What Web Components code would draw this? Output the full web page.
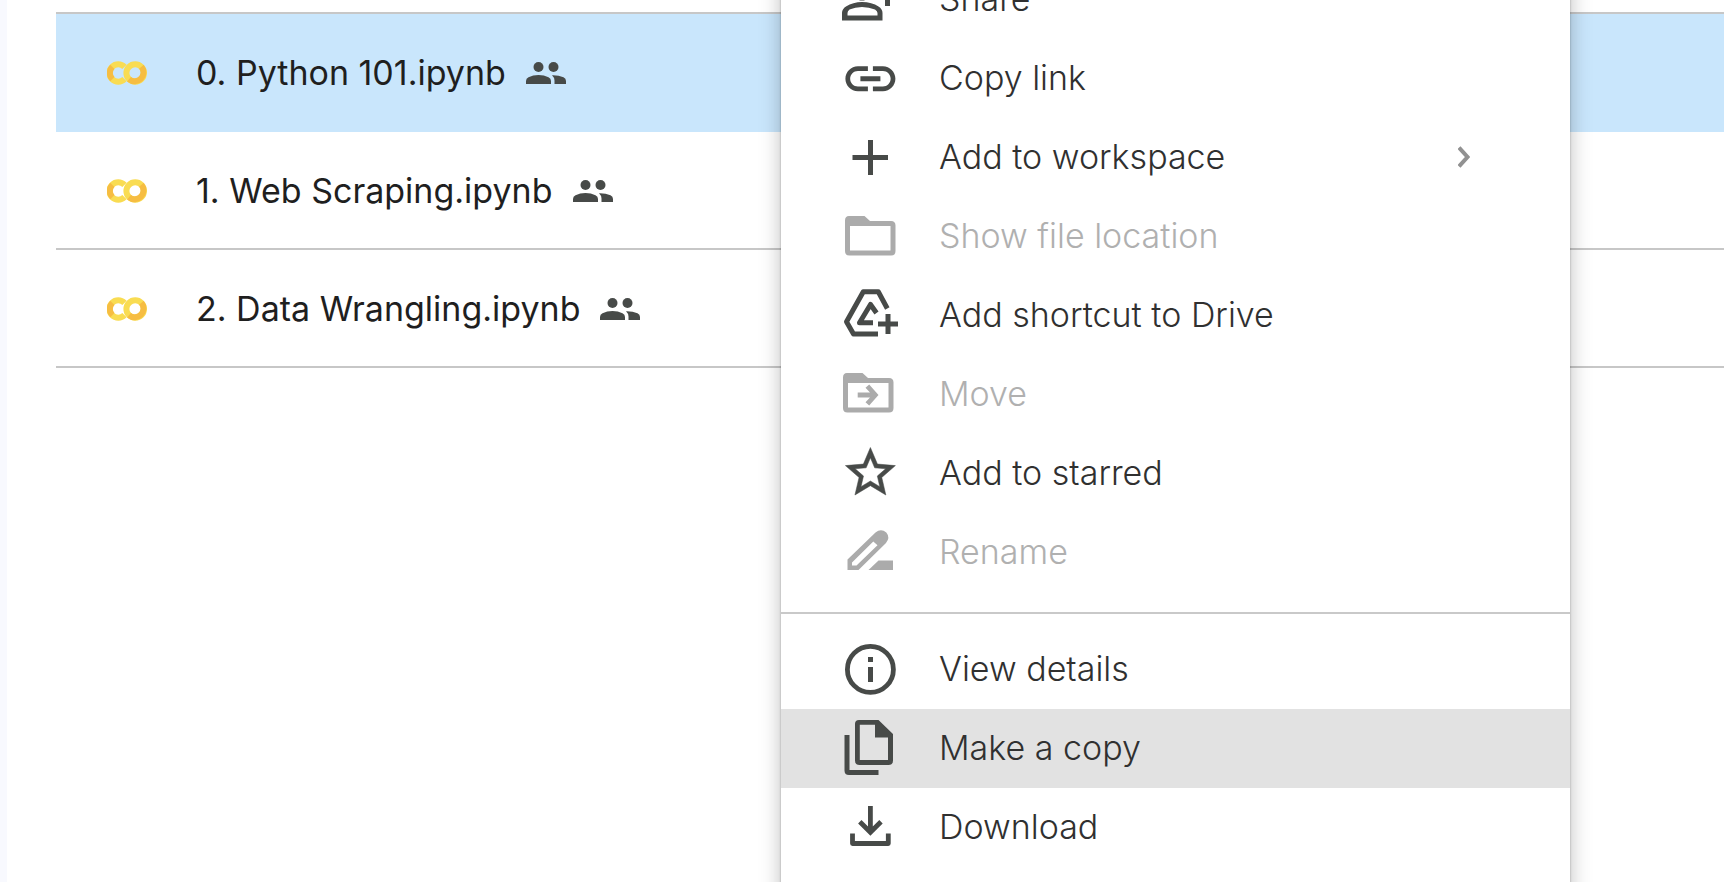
<!DOCTYPE html>
<html lang="en">
<head>
<meta charset="utf-8">
<meta name="viewport" content="width=device-width, initial-scale=1">
<title>Shared notebooks</title>
<style>
  body { margin: 0; font-family: Inter, "Liberation Sans", sans-serif; color: #1f1f1f; background: #fff; }
</style>
</head>
<body>
<drive-page>
  <file-list>
    <file-row selected>0. Python 101.ipynb</file-row>
    <file-row>1. Web Scraping.ipynb</file-row>
    <file-row>2. Data Wrangling.ipynb</file-row>
  </file-list>
  <context-menu slot="menu">
    <menu-entry icon="share">Share</menu-entry>
    <menu-entry icon="link">Copy link</menu-entry>
    <menu-entry icon="plus" submenu>Add to workspace</menu-entry>
    <menu-entry icon="folder" disabled>Show file location</menu-entry>
    <menu-entry icon="shortcut">Add shortcut to Drive</menu-entry>
    <menu-entry icon="move" disabled>Move</menu-entry>
    <menu-entry icon="star">Add to starred</menu-entry>
    <menu-entry icon="rename" disabled>Rename</menu-entry>
    <menu-divider></menu-divider>
    <menu-entry icon="info">View details</menu-entry>
    <menu-entry icon="copy" active>Make a copy</menu-entry>
    <menu-entry icon="download">Download</menu-entry>
  </context-menu>
</drive-page>

<script>
const FOLDER = '<path fill-rule="evenodd" d="M9 10H24.500L30 15H51Q55.500 15 55.500 19.500V45Q55.500 49.500 51 49.500H9.500Q5 49.500 5 45V14.500Q5 10 9 10ZM10 20V44.500H50.500V20Z"/>';

// Glyphs are drawn on a 60-unit canvas; Material shapes on 24 units are scaled up.
const ICONS = {
  share: '<circle cx="22" cy="21" r="8" fill="none" stroke="currentColor" stroke-width="5"/><path fill-rule="evenodd" d="M2 51.500V44Q2 40 6 37.500Q13 33 22 33Q32 33 38.500 37.500Q42.500 40 42.500 44V51.500ZM7.500 46.500H37.500V44Q37.500 42 35 40.500Q29 38 22 38Q15 38 9.500 40.500Q7.500 42 7.500 44Z"/><path d="M45 16H50V23.500H57.500V28.500H50V37H45V28.500H37.500V23.500H45Z"/>',
  link: '<g transform="translate(.4 .7) scale(2.5)"><path d="M3.900 12c0-1.710 1.390-3.100 3.100-3.100h4V7H7c-2.760 0-5 2.240-5 5s2.240 5 5 5h4v-1.900H7c-1.710 0-3.100-1.390-3.100-3.100zM8 13h8v-2H8v2zm9-6h-4v1.900h4c1.710 0 3.100 1.390 3.100 3.100s-1.390 3.100-3.100 3.100h-4V17h4c2.760 0 5-2.240 5-5s-2.240-5-5-5z"/></g>',
  plus: '<path d="M28 13H33V28H48V33H33V48H28V33H12.500V28H28Z"/>',
  folder: FOLDER,
  shortcut: '<g fill="none" stroke="currentColor" stroke-width="5"><path stroke-linejoin="round" d="M47.300 23.500L38.300 6.700H23.300L6.500 36.700L13.500 49H38"/><path stroke-linejoin="round" d="M33 37.800H19.500L30.500 19.500L36.500 28"/><path d="M48 29V49M38 39H58"/></g>',
  move: `<g transform="translate(-2 -1)">${FOLDER}</g><path d="M17.700 28.500H30L25.500 23.800L29.200 20.500L38.500 31L29.200 41.500L25.500 38.200L30 33.500H17.700Z"/>`,
  star: '<g transform="translate(.4 -.5) scale(2.5)"><path stroke="currentColor" stroke-width=".2" d="M22 9.240l-7.190-.62L12 2 9.190 8.630 2 9.240l5.460 4.730L5.820 21 12 17.270 18.180 21l-1.630-7.030L22 9.240zM12 15.400l-3.760 2.270 1-4.280-3.320-2.880 4.380-.38L12 6.100l1.710 4.040 4.380.38-3.320 2.880 1 4.280L12 15.400z"/></g>',
  rename: '<path fill-rule="evenodd" d="M7.500 48V37.500L35.500 10.500Q41 6 46.300 10.500Q50.500 15.500 46 21L18.500 48ZM12 43.500H16.500L37.500 23.300L33.300 19.500L12 40.500Z"/><path d="M28.500 48L38.500 38.500H53V48Z"/>',
  info: '<circle cx="30.400" cy="30.400" r="23" fill="none" stroke="currentColor" stroke-width="4.800"/><path d="M28 18H33V23H28ZM28 28H33V43H28Z"/>',
  copy: '<path fill-rule="evenodd" d="M19 2H38.500L53 16V42.500Q53 47 48.500 47H19.500Q15 47 15 42.500V6Q15 2 19 2ZM19.800 6.800V42H48V19.500H35V6.800Z"/><path d="M4.500 17H9.500V52H38.500V57H9Q4.500 57 4.500 52.500Z"/>',
  download: '<g fill="none" stroke="currentColor" stroke-width="4.800"><path d="M30.400 9V35M19.800 24.800L30.400 35.300L41 24.800"/><path stroke-linejoin="round" d="M12.500 36.500V46.500H48.300V36.500"/></g>'
};

function define(name, markup, setup) {
  const template = document.createElement('template');
  template.innerHTML = markup;
  customElements.define(name, class extends HTMLElement {
    constructor() {
      super();
      this.attachShadow({ mode: 'open' }).append(template.content.cloneNode(true));
    }
    connectedCallback() { if (setup) setup(this, this.shadowRoot); }
  });
}

define('drive-page', `
  <style>
    :host { display: grid; grid-template-columns: 7px 1fr; position: relative; height: 100vh; overflow: hidden; }
    .gutter { background: #f8f9fe; }
    main { padding: 12px 0 0 49px; }
    ::slotted([slot="menu"]) { position: absolute; left: 781px; top: -40px; width: 789px; }
  </style>
  <div class="gutter"></div>
  <main><slot></slot></main>
  <slot name="menu"></slot>`);

define('file-list', `
  <style>:host { display: block; border-top: 2px solid #c7c7c7; }</style>
  <slot></slot>`, el => el.setAttribute('role', 'list'));

define('file-row', `
  <style>
    :host { display: block; border-bottom: 2px solid #c7c7c7; }
    :host([selected]) { background: #c9e6fc; border-bottom-color: #c9e6fc; }
    a { display: flex; align-items: center; box-sizing: border-box; height: 116px; padding: 2px 0 0 51px; color: inherit; text-decoration: none; font-size: 34px; line-height: 44px; white-space: nowrap; }
    .logo { width: 40px; height: 24px; margin-right: 49px; flex: none; }
    .people { width: 40px; height: 24px; margin-left: 20px; flex: none; }
  </style>
  <a href="#">
    <svg class="logo" viewBox="0 0 40 24" fill="none" stroke-width="6" aria-hidden="true">
      <path stroke="#f9dc52" d="M17.500 5.800A8.800 8.800 0 1 0 17.500 18.200"/>
      <path stroke="#f6bd42" d="M5.400 5.800A8.800 8.800 0 0 0 5.400 18.200"/>
      <circle stroke="#f9dc52" cx="28.200" cy="12" r="8.800"/>
      <path stroke="#f6bd42" d="M34.400 5.800A8.800 8.800 0 0 1 22 18.200"/>
    </svg>
    <slot></slot>
    <svg class="people" viewBox="0 0 40 24" fill="#474a48" role="img" aria-label="Shared">
      <circle cx="12.500" cy="6" r="5"/><circle cx="27.500" cy="6" r="5"/>
      <path d="M0 23V20Q0 17.500 2.500 16.300Q7 14 12.500 14Q18 14 22.500 16.300Q25 17.500 25 20V23Z"/>
      <path d="M26 14.200Q32.500 14 37.500 16.300Q40 17.500 40 20V23H28.500V19.500Q28.500 16.500 26 14.200Z"/>
    </svg>
  </a>`, el => el.setAttribute('role', 'listitem'));

define('context-menu', `
  <style>
    :host { display: block; box-sizing: border-box; background: #fff; padding-bottom: 48px; box-shadow: 0 0 2px rgba(0,0,0,.3), 0 4px 20px rgba(0,0,0,.26); }
  </style>
  <slot></slot>`, el => el.setAttribute('role', 'menu'));

define('menu-divider', `
  <style>
    :host { display: block; padding: 20px 0 16px; }
    hr { margin: 0; border: 0; border-top: 2px solid #c9c9c9; }
  </style>
  <hr>`);

define('menu-entry', `
  <style>
    :host { display: block; color: #303030; --glyph: #474a48; }
    :host([disabled]) { color: #b0b0b0; --glyph: #ababab; }
    :host([active]) { background: #e2e2e2; }
    button { display: flex; align-items: center; box-sizing: border-box; width: 100%; height: 79px; padding: 0 100px 2px 59px; border: 0; background: none; color: inherit; font: 300 34px/44px Inter, "Liberation Sans", sans-serif; text-align: left; white-space: nowrap; }
    .icon { width: 60px; height: 60px; margin-right: 39px; flex: none; color: var(--glyph); fill: currentColor; }
    .arrow { width: 12px; height: 24px; margin-left: auto; fill: none; stroke: #919191; stroke-width: 4; }
  </style>
  <button type="button" role="menuitem">
    <svg class="icon" viewBox="0 0 60 60" aria-hidden="true"></svg>
    <slot></slot>
  </button>`, (el, root) => {
    root.querySelector('.icon').innerHTML = ICONS[el.getAttribute('icon')];
    const button = root.querySelector('button');
    button.disabled = el.hasAttribute('disabled');
    if (el.hasAttribute('submenu')) {
      button.insertAdjacentHTML('beforeend', '<svg class="arrow" viewBox="0 0 12 24" aria-hidden="true"><path d="M1 2.500L9.500 12L1 21.500"/></svg>');
      button.setAttribute('aria-haspopup', 'menu');
    }
  });
</script>
</body>
</html>
